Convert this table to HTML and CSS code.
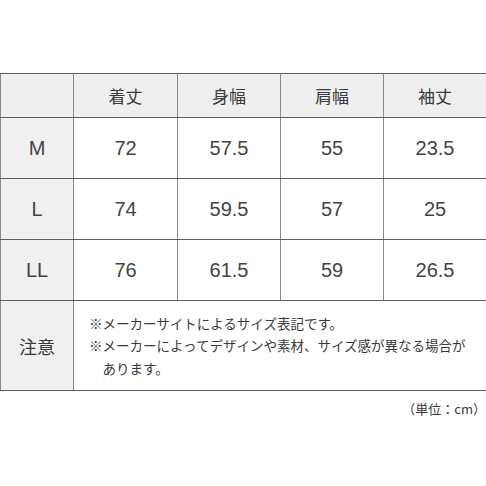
FILE: index.html
```html
<!DOCTYPE html>
<html lang="ja">
<head>
<meta charset="utf-8">
<link rel="stylesheet" href="styles.css">
</head>
<body>
<div class="page">
  <table class="size">
    <colgroup>
      <col class="c0"><col class="c1"><col class="c2"><col class="c3"><col class="c4">
    </colgroup>
    <tr class="head">
      <th class="corner"></th>
      <th>着丈</th>
      <th>身幅</th>
      <th>肩幅</th>
      <th>袖丈</th>
    </tr>
    <tr class="row">
      <th class="lab">M</th>
      <td>72</td><td>57.5</td><td>55</td><td>23.5</td>
    </tr>
    <tr class="row">
      <th class="lab">L</th>
      <td>74</td><td>59.5</td><td>57</td><td>25</td>
    </tr>
    <tr class="row">
      <th class="lab">LL</th>
      <td>76</td><td>61.5</td><td>59</td><td>26.5</td>
    </tr>
    <tr class="notes">
      <th class="lab jp">注意</th>
      <td colspan="4" class="notecell">
        <div class="note">※メーカーサイトによるサイズ表記です。</div>
        <div class="note">※メーカーによってデザインや素材、サイズ感が異なる場合が<br>あります。</div>
      </td>
    </tr>
  </table>
  <div class="unit"><span class="unit-text">（単位：cm）</span></div>
</div>
</body>
</html>
```
FILE: styles.css
```css
html, body {
  margin: 0;
  padding: 0;
  background: #ffffff;
  overflow: hidden;
}
body {
  font-family: "Liberation Sans", "Noto Sans CJK JP", sans-serif;
  color: #3a3a3a;
}
.page {
  width: 486px;
  padding-top: 73px;
}
.size {
  width: 486px;
  border-collapse: collapse;
  table-layout: fixed;
}
.c0 { width: 73px; }
.c1 { width: 104px; }
.c2 { width: 103px; }
.c3 { width: 103px; }
.c4 { width: 103px; }
.size th, .size td {
  border-left: 1px solid #8a8a8a;
  border-right: 1px solid #8a8a8a;
  border-top: 1px solid #5e5e5e;
  border-bottom: 1px solid #5e5e5e;
  padding: 0;
  text-align: center;
  vertical-align: middle;
}
.head th {
  height: 43px;
  background: #efefef;
  font-family: "Noto Sans CJK JP", sans-serif;
  font-weight: 400;
  font-size: 17px;
  color: #3a3a3a;
}
.row th, .row td {
  height: 60px;
  font-size: 20px;
  font-weight: 400;
  color: #444444;
}
.lab {
  background: #f0f0f0;
  font-weight: 400;
}
.jp {
  font-family: "Noto Sans CJK JP", sans-serif;
  font-size: 18px;
}
.notes th, .notes td {
  height: 89px;
}
.notecell {
  text-align: left !important;
  padding-left: 15px !important;
  font-family: "Noto Sans CJK JP", sans-serif;
  font-size: 13.5px;
  line-height: 22.5px;
  color: #3a3a3a;
}
.note {
  padding-left: 1em;
  text-indent: -1em;
  white-space: nowrap;
}
.unit {
  display: flex;
  justify-content: flex-end;
  margin-top: 10px;
}
.unit-text {
  font-family: "Noto Sans CJK JP", sans-serif;
  font-size: 13px;
  line-height: 16px;
  color: #3a3a3a;
}
```
